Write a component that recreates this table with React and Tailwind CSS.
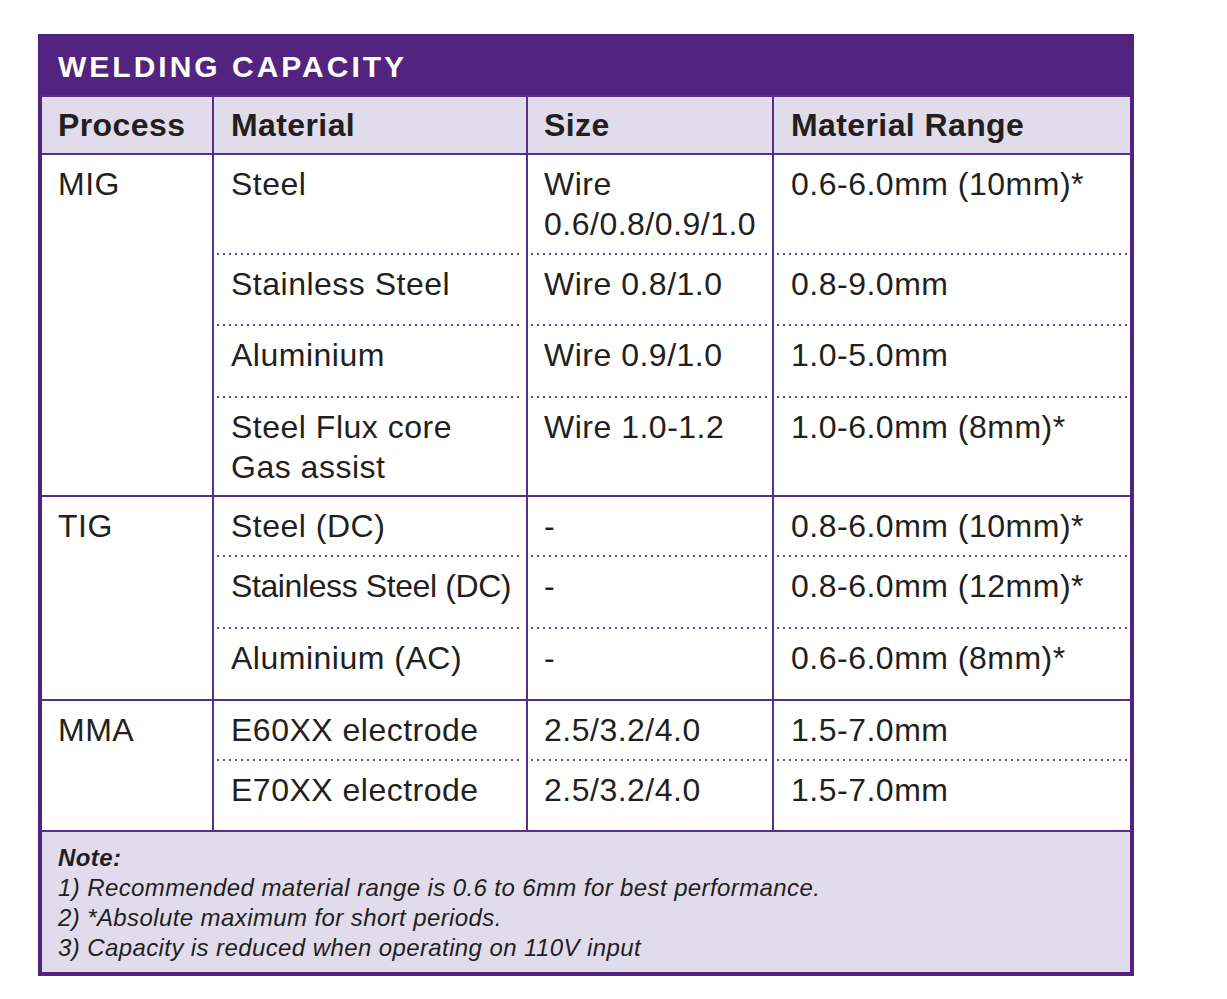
import React from "react";

const dotted =
  "h-[2px] mx-[3px] bg-[image:repeating-linear-gradient(90deg,#6a40a0_0px,#6a40a0_2px,transparent_2px,transparent_6px)]";

function Cell({ children, className = "" }) {
  return <div className={`pl-4 pt-[9px] leading-[40px] whitespace-nowrap ${className}`}>{children}</div>;
}

function SubRow({ h, a, b, c }) {
  return (
    <div className={`flex ${h}`}>
      <Cell className="w-[314px] border-l-2 border-[#5a2d8c] pl-[17px]">{a}</Cell>
      <Cell className="w-[246px] border-l-2 border-[#5a2d8c]">{b}</Cell>
      <Cell className="flex-1 border-l-2 border-[#5a2d8c] pl-[17px]">{c}</Cell>
    </div>
  );
}

function Sep() {
  return (
    <div className="flex h-[2px]">
      <div className="w-[314px] border-l-2 border-[#5a2d8c]">
        <div className={dotted} />
      </div>
      <div className="w-[246px] border-l-2 border-[#5a2d8c]">
        <div className={dotted} />
      </div>
      <div className="flex-1 border-l-2 border-[#5a2d8c]">
        <div className={dotted} />
      </div>
    </div>
  );
}

function Group({ name, rows }) {
  return (
    <div className="flex border-b-2 border-[#5a2d8c]">
      <Cell className="w-[170px]">{name}</Cell>
      <div className="flex-1 flex flex-col">
        {rows.map((r, i) => (
          <React.Fragment key={i}>
            {i > 0 && <Sep />}
            <SubRow h={r.h} a={r.a} b={r.b} c={r.c} />
          </React.Fragment>
        ))}
      </div>
    </div>
  );
}

export default function App() {
  return (
    <div className="bg-white w-[1227px] h-[999px] pt-[34px] pl-[38px] font-['Liberation_Sans',Arial,Helvetica,sans-serif] text-[#231f20]">
      <div className="w-[1096px] border-4 border-[#52247f] bg-white">
        <div className="h-[57px] bg-[#52247f] flex items-center pl-4 text-white font-bold text-[30px] tracking-[3px]">
          WELDING CAPACITY
        </div>
        <div className="flex h-[60px] bg-[#e1dcec] border-y-2 border-[#5a2d8c] font-bold text-[32px] tracking-[0.4px]">
          <div className="w-[170px] pl-4 flex items-center">Process</div>
          <div className="w-[314px] border-l-2 border-[#5a2d8c] pl-[17px] flex items-center">Material</div>
          <div className="w-[246px] border-l-2 border-[#5a2d8c] pl-4 flex items-center">Size</div>
          <div className="flex-1 border-l-2 border-[#5a2d8c] pl-[17px] flex items-center">Material Range</div>
        </div>
        <div className="text-[32px] tracking-[0.5px]">
          <Group
            name="MIG"
            rows={[
              { h: "h-[98px]", a: "Steel", b: (<>Wire<br />0.6/0.8/0.9/1.0</>), c: "0.6-6.0mm (10mm)*" },
              { h: "h-[69px]", a: "Stainless Steel", b: "Wire 0.8/1.0", c: "0.8-9.0mm" },
              { h: "h-[70px]", a: "Aluminium", b: "Wire 0.9/1.0", c: "1.0-5.0mm" },
              { h: "h-[97px]", a: (<>Steel Flux core<br />Gas assist</>), b: "Wire 1.0-1.2", c: "1.0-6.0mm (8mm)*" },
            ]}
          />
          <Group
            name="TIG"
            rows={[
              { h: "h-[58px]", a: "Steel (DC)", b: "-", c: "0.8-6.0mm (10mm)*" },
              { h: "h-[70px]", a: (<span className="tracking-[-0.4px]">Stainless Steel (DC)</span>), b: "-", c: "0.8-6.0mm (12mm)*" },
              { h: "h-[70px]", a: "Aluminium (AC)", b: "-", c: "0.6-6.0mm (8mm)*" },
            ]}
          />
          <Group
            name="MMA"
            rows={[
              { h: "h-[58px]", a: "E60XX electrode", b: "2.5/3.2/4.0", c: "1.5-7.0mm" },
              { h: "h-[69px]", a: "E70XX electrode", b: "2.5/3.2/4.0", c: "1.5-7.0mm" },
            ]}
          />
        </div>
        <div className="h-[140px] bg-[#e1dcec] pl-4 pt-[11px] italic text-[24px] leading-[30px] tracking-[0.4px]">
          <div className="font-bold">Note:</div>
          <div>1) Recommended material range is 0.6 to 6mm for best performance.</div>
          <div>2) *Absolute maximum for short periods.</div>
          <div>3) Capacity is reduced when operating on 110V input</div>
        </div>
      </div>
    </div>
  );
}
